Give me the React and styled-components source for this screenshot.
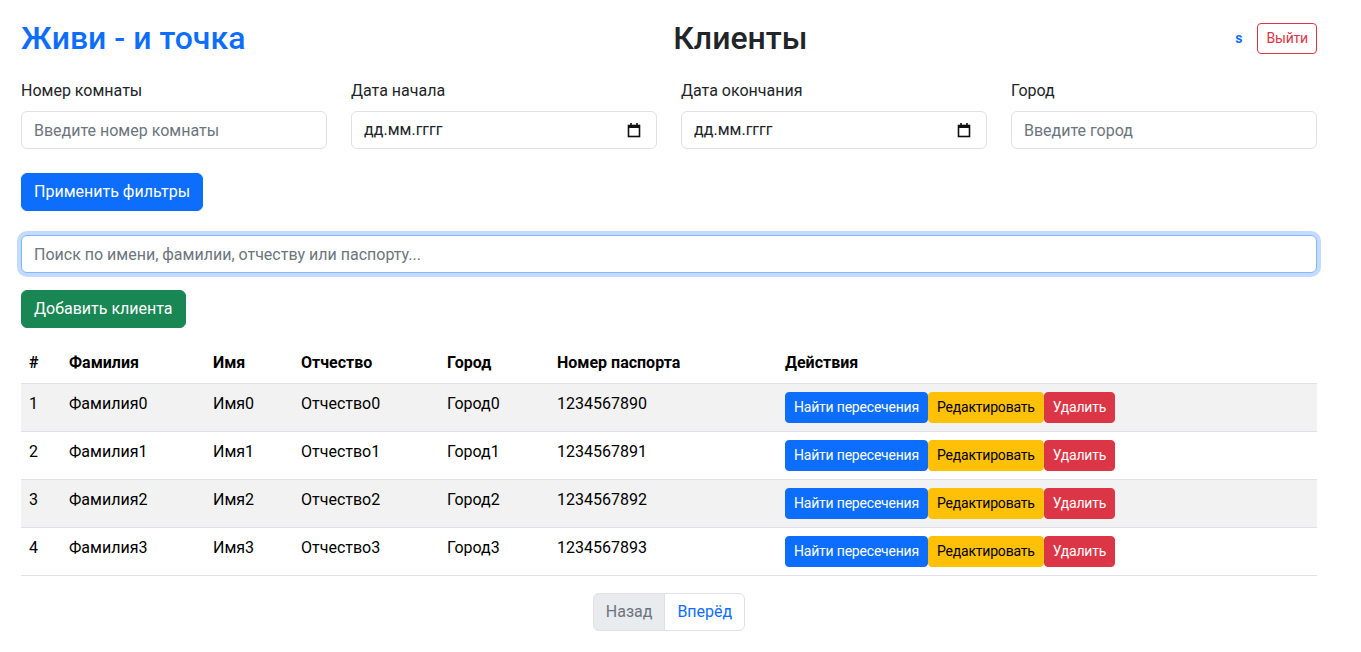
import styled, { createGlobalStyle } from "styled-components";

const Global = createGlobalStyle`
  body {
    margin: 0;
    background: #fff;
    font-family: "Segoe UI", Roboto, "Noto Sans", "Liberation Sans", sans-serif;
    font-size: 16px;
    line-height: 1.5;
    color: #212529;
  }
  * { box-sizing: border-box; }
`;

const Page = styled.div`
  width: 1296px;
  margin-left: 21px;
  padding-bottom: 20px;
`;

const Header = styled.header`
  display: flex;
  justify-content: space-between;
  align-items: center;
  margin-top: 19px;
  height: 38px;
`;

const Title = styled.h2`
  margin: 0;
  font-size: 32px;
  font-weight: 500;
  line-height: 1.2;
  color: ${(p) => (p.brand ? "#0d6efd" : "#212529")};
`;

const UserBox = styled.div`
  display: flex;
  align-items: center;
  gap: 15px;
`;

const UserName = styled.span`
  color: #0d6efd;
  font-weight: 700;
  font-size: 14px;
`;

const Btn = styled.button`
  font-family: inherit;
  font-size: ${(p) => (p.small ? "14px" : "16px")};
  line-height: ${(p) => (p.small ? "21px" : "24px")};
  letter-spacing: ${(p) => (p.small ? "-0.2px" : "normal")};
  padding: ${(p) => (p.small ? "4px 8px" : "6px 12px")};
  border-radius: ${(p) => (p.small ? "4px" : "6px")};
  border: 1px solid ${(p) => p.bg || p.outline};
  background: ${(p) => p.bg || "transparent"};
  color: ${(p) => p.fg || "#fff"};
  cursor: pointer;
  white-space: nowrap;
`;

const Filters = styled.div`
  display: grid;
  grid-template-columns: repeat(4, 1fr);
  gap: 24px;
  margin-top: 22px;
`;

const Field = styled.div`
  display: flex;
  flex-direction: column;
`;

const Label = styled.label`
  line-height: 24px;
  margin-bottom: 8px;
`;

const Input = styled.input`
  font-family: inherit;
  font-size: 16px;
  line-height: 24px;
  height: 38px;
  padding: 6px 12px;
  color: #212529;
  background: #fff;
  border: 1px solid ${(p) => (p.focused ? "#86b7fe" : "#dee2e6")};
  border-radius: 6px;
  outline: none;
  width: 100%;
  box-shadow: ${(p) => (p.focused ? "0 0 0 4px rgba(13, 110, 253, 0.25)" : "none")};
  &::placeholder {
    color: #6c757d;
  }
`;

const DateBox = styled.div`
  display: flex;
  align-items: center;
  justify-content: space-between;
  height: 38px;
  padding: 0 15px 0 12px;
  border: 1px solid #dee2e6;
  border-radius: 6px;
  background: #fff;
`;

const DateText = styled.span`
  color: #212529;
  font-size: 16px;
`;

const Row = styled.div`
  margin-top: ${(p) => p.mt}px;
`;

const Table = styled.table`
  width: 100%;
  border-collapse: collapse;
  margin-top: 15px;
  color: #000;
`;

const Th = styled.th`
  text-align: left;
  font-weight: 700;
  padding: 8px;
  line-height: 24px;
  vertical-align: top;
  border-bottom: 1px solid #dee2e6;
  width: ${(p) => (p.w ? `${p.w}px` : "auto")};
`;

const Tr = styled.tr`
  background: ${(p) => (p.striped ? "#f2f2f2" : "#fff")};
`;

const Td = styled.td`
  padding: 8px;
  line-height: 24px;
  vertical-align: top;
  border-bottom: 1px solid #dee2e6;
`;

const Actions = styled.div`
  display: flex;
`;

const Pager = styled.nav`
  display: flex;
  justify-content: center;
  margin-top: 17px;
`;

const PageItem = styled.span`
  display: inline-block;
  padding: 6px 12px;
  line-height: 24px;
  font-size: 16px;
  border: 1px solid #dee2e6;
  background: ${(p) => (p.disabled ? "#e9ecef" : "#fff")};
  color: ${(p) => (p.disabled ? "#6c757d" : "#0d6efd")};
  &:first-child {
    border-radius: 6px 0 0 6px;
  }
  &:last-child {
    border-radius: 0 6px 6px 0;
    margin-left: -1px;
  }
`;

const CalendarIcon = () => (
  <svg width="14" height="16" viewBox="0 0 14 16">
    <rect x="1.5" y="3.5" width="11" height="11" fill="none" stroke="#111" strokeWidth="1.6" />
    <rect x="1" y="3" width="12" height="3" fill="#111" />
    <rect x="3.2" y="1" width="1.6" height="3" fill="#111" />
    <rect x="9.2" y="1" width="1.6" height="3" fill="#111" />
  </svg>
);

const clients = [0, 1, 2, 3].map((i) => ({
  id: i + 1,
  last: `Фамилия${i}`,
  first: `Имя${i}`,
  middle: `Отчество${i}`,
  city: `Город${i}`,
  passport: `123456789${i}`,
}));

export default function App() {
  return (
    <>
      <Global />
      <Page>
        <Header>
          <Title brand>Живи - и точка</Title>
          <Title>Клиенты</Title>
          <UserBox>
            <UserName>s</UserName>
            <Btn small outline="#dc3545" fg="#dc3545">
              Выйти
            </Btn>
          </UserBox>
        </Header>

        <Filters>
          <Field>
            <Label>Номер комнаты</Label>
            <Input placeholder="Введите номер комнаты" />
          </Field>
          <Field>
            <Label>Дата начала</Label>
            <DateBox>
              <DateText>дд.мм.гггг</DateText>
              <CalendarIcon />
            </DateBox>
          </Field>
          <Field>
            <Label>Дата окончания</Label>
            <DateBox>
              <DateText>дд.мм.гггг</DateText>
              <CalendarIcon />
            </DateBox>
          </Field>
          <Field>
            <Label>Город</Label>
            <Input placeholder="Введите город" />
          </Field>
        </Filters>

        <Row mt={24}>
          <Btn bg="#0d6efd">Применить фильтры</Btn>
        </Row>

        <Row mt={24}>
          <Input focused autoFocus placeholder="Поиск по имени, фамилии, отчеству или паспорту..." />
        </Row>

        <Row mt={17}>
          <Btn bg="#198754">Добавить клиента</Btn>
        </Row>

        <Table>
          <thead>
            <tr>
              <Th w={40}>#</Th>
              <Th w={144}>Фамилия</Th>
              <Th w={88}>Имя</Th>
              <Th w={146}>Отчество</Th>
              <Th w={110}>Город</Th>
              <Th w={228}>Номер паспорта</Th>
              <Th>Действия</Th>
            </tr>
          </thead>
          <tbody>
            {clients.map((c, i) => (
              <Tr key={c.id} striped={i % 2 === 0}>
                <Td>{c.id}</Td>
                <Td>{c.last}</Td>
                <Td>{c.first}</Td>
                <Td>{c.middle}</Td>
                <Td>{c.city}</Td>
                <Td>{c.passport}</Td>
                <Td>
                  <Actions>
                    <Btn small bg="#0d6efd">Найти пересечения</Btn>
                    <Btn small bg="#ffc107" fg="#000">Редактировать</Btn>
                    <Btn small bg="#dc3545">Удалить</Btn>
                  </Actions>
                </Td>
              </Tr>
            ))}
          </tbody>
        </Table>

        <Pager>
          <PageItem disabled>Назад</PageItem>
          <PageItem>Вперёд</PageItem>
        </Pager>
      </Page>
    </>
  );
}
